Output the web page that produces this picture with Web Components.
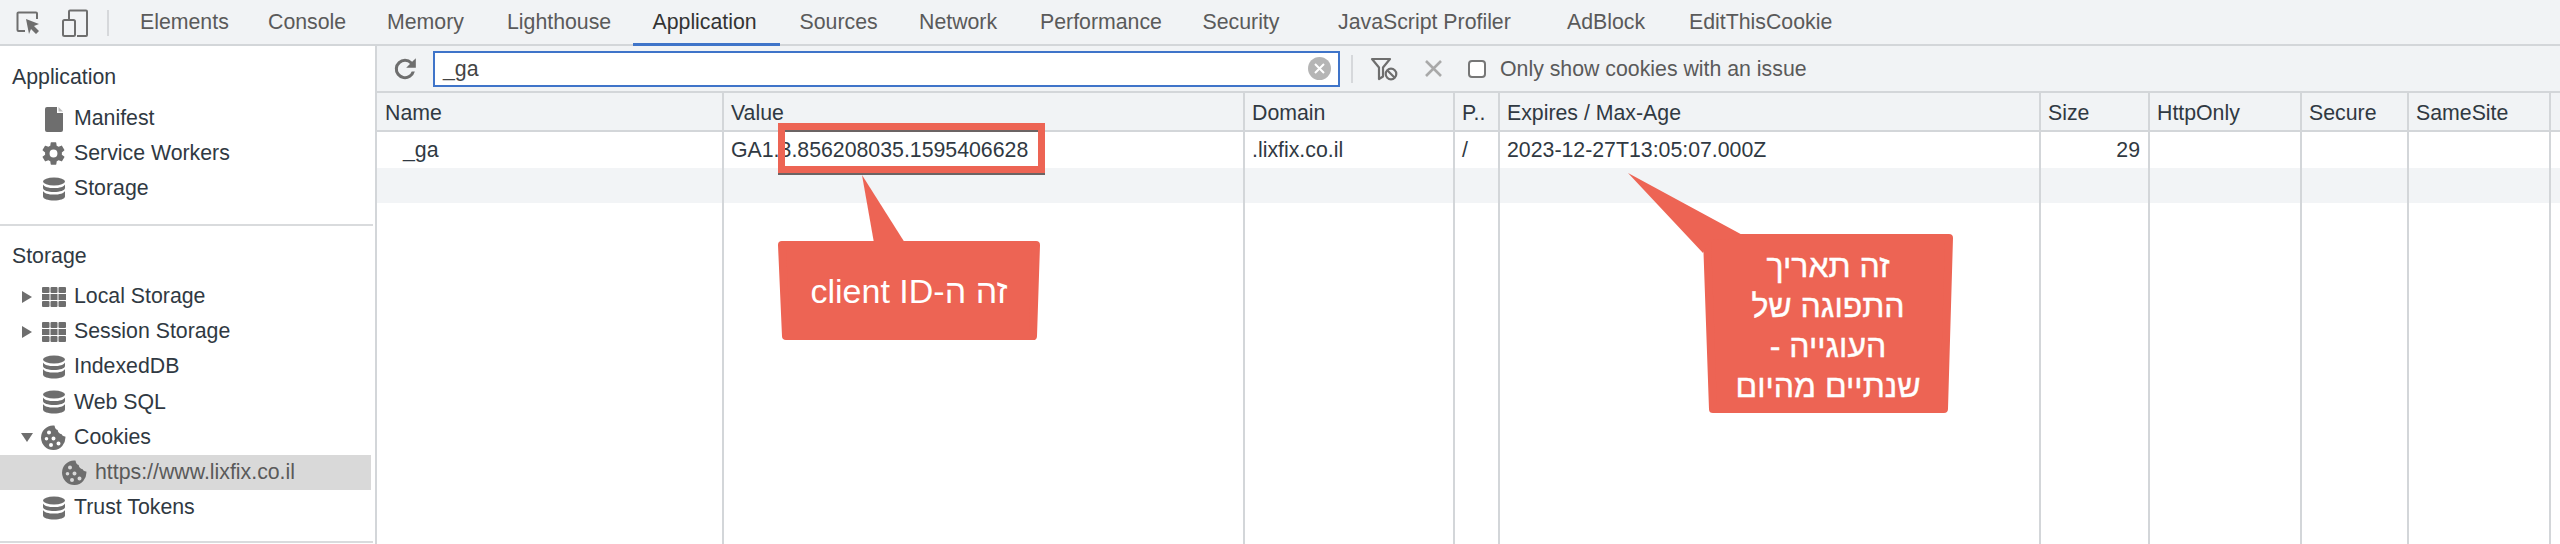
<!DOCTYPE html>
<html lang="en">
<head>
<meta charset="utf-8">
<title>Application - Cookies</title>
<style>
  html, body { margin: 0; height: 100%; overflow: hidden; background: #fff; }
  body { font: 21.3px "Liberation Sans", Arial, sans-serif; color: #303942; }
  .he { font-size: 32px; -webkit-text-stroke: 0.4px #fff; }
</style>
</head>
<body>
<dt-app>
  <dt-tabbar></dt-tabbar>
  <dt-sidebar></dt-sidebar>
  <dt-cookies></dt-cookies>
</dt-app>
<dt-frame></dt-frame>
<dt-callout box="778 175 262 165" body="782,245 1036,245 1033,336 786,336" tip="862,175 874,243 905,243" inset="66 0 0 0">
  <span dir="rtl">זה ה-client ID</span>
</dt-callout>
<dt-callout box="1628 173 325 240" body="1707,238 1949,238 1944,409 1713,409" tip="1628,173 1748,238 1710,240 1703,253" inset="65 0 0 75">
  <span dir="rtl" class="he">זה תאריך<br>התפוגה של<br>העוגייה -<br>שנתיים מהיום</span>
</dt-callout>

<script>
const GREY = "#6e6e6e";

const ICONS = {
  inspect: `<svg width="24" height="24" viewBox="0 0 24 24"><path d="M9 20H2.500a1 1 0 0 1-1-1V2.500a1 1 0 0 1 1-1H20a1 1 0 0 1 1 1V8" fill="none" stroke="${GREY}" stroke-width="2"/><path d="M10 8l13 5-5 2 5 5-3 3-5-5-2 5z" fill="${GREY}"/></svg>`,
  device: `<svg width="28" height="28" viewBox="0 0 28 28" fill="none" stroke="${GREY}" stroke-width="2"><path d="M8 11V2.500a1 1 0 0 1 1-1h16a1 1 0 0 1 1 1V26a1 1 0 0 1-1 1H16"/><rect x="2" y="11" width="12" height="16" rx="1.500"/></svg>`,
  file: `<svg width="20" height="26" viewBox="0 0 20 26"><path d="M3 1h9l1 0v6h6v17a2 2 0 0 1-2 2H3a2 2 0 0 1-2-2V3a2 2 0 0 1 2-2z" fill="${GREY}"/><path d="M14.500 1l4.500 4.500h-4.500z" fill="#bdbdbd"/></svg>`,
  gear: `<svg width="27" height="27" viewBox="0 0 24 24"><path fill="${GREY}" d="M19.400 13c.04-.33.06-.66.06-1s-.02-.67-.06-1l2.100-1.650c.2-.15.240-.42.120-.64l-2-3.460c-.12-.22-.39-.3-.61-.22l-2.500 1c-.52-.4-1.080-.73-1.690-.98l-.38-2.650A.49.49 0 0 0 14 2h-4c-.25 0-.46.18-.49.420l-.38 2.650c-.61.250-1.170.59-1.690.98l-2.500-1c-.23-.09-.49 0-.61.220l-2 3.460c-.13.220-.07.490.12.640L4.570 11c-.04.330-.07.670-.07 1s.03.670.07 1l-2.110 1.650c-.19.150-.25.420-.12.640l2 3.460c.12.220.39.300.61.220l2.500-1c.52.400 1.080.730 1.690.980l.38 2.650c.03.240.24.420.49.420h4c.25 0 .46-.18.49-.42l.38-2.650c.61-.25 1.170-.59 1.690-.98l2.500 1c.23.090.49 0 .61-.22l2-3.460c.12-.22.07-.49-.12-.64L19.400 13zM12 15.500a3.500 3.500 0 1 1 0-7 3.500 3.500 0 0 1 0 7z"/></svg>`,
  db: `<svg width="24" height="24" viewBox="0 0 24 24" fill="${GREY}"><ellipse cx="12" cy="4.500" rx="11" ry="4"/><path d="M1 7.500c1 2.500 5.500 3.600 11 3.600s10-1.100 11-3.600v3.500c0 2.400-5 4-11 4S1 13.400 1 11z"/><path d="M1 14c1 2.500 5.500 3.600 11 3.600S22 16.500 23 14v5.500c0 2.400-5 4-11 4s-11-1.600-11-4z"/></svg>`,
  grid: `<svg width="24" height="20" viewBox="0 0 24 20" fill="${GREY}"><rect x="0" y="0" width="7.500" height="6" rx="1"/><rect x="8.500" y="0" width="7" height="6" rx="1"/><rect x="16.500" y="0" width="7.500" height="6" rx="1"/><rect x="0" y="7" width="7.500" height="6"/><rect x="8.500" y="7" width="7" height="6"/><rect x="16.500" y="7" width="7.500" height="6"/><rect x="0" y="14" width="7.500" height="6" rx="1"/><rect x="8.500" y="14" width="7" height="6" rx="1"/><rect x="16.500" y="14" width="7.500" height="6" rx="1"/></svg>`,
  cookie: `<svg width="25" height="25" viewBox="0 0 25 25"><path fill="${GREY}" fill-rule="evenodd" d="M12 .500c.6 0 1.200.05 1.700.13-.2 2 1 3.900 3 4.400.1 2.200 1.700 4 4 4.200.5 1.400 1.900 2.300 3.600 2.200.1.200.1.400.1.600A12.200 12.200 0 1 1 12 .500zM8 5.500a2 2 0 1 0 0 4 2 2 0 0 0 0-4zM5.500 12a1.800 1.800 0 1 0 0 3.600 1.800 1.800 0 0 0 0-3.600zm7-.5a2 2 0 1 0 0 4 2 2 0 0 0 0-4zM10 18a2 2 0 1 0 0 4 2 2 0 0 0 0-4zm7.500-1.500a2 2 0 1 0 0 4 2 2 0 0 0 0-4z"/></svg>`,
  reload: `<svg width="26" height="26" viewBox="0 0 24 24"><path fill="${GREY}" d="M18.600 5.400A9.300 9.300 0 0 0 12 2.600a9.400 9.400 0 1 0 9.100 11.700h-2.900A6.600 6.600 0 1 1 12 5.400c1.800 0 3.400.8 4.600 1.900l-3.500 3.500H22V2z"/></svg>`,
  filterClear: `<svg width="28" height="24" viewBox="0 0 28 24"><path d="M2 2h18l-7 8.500v9l-4 2.500V10.500z" fill="none" stroke="${GREY}" stroke-width="2.200" stroke-linejoin="round"/><circle cx="21" cy="17" r="5.300" fill="#f1f3f5" stroke="${GREY}" stroke-width="2.200"/><path d="M17.500 13.500l7 7" stroke="${GREY}" stroke-width="2.200"/></svg>`,
};

// Small helper so each class only has to state its css and markup
function shadow(host, css, html) {
  host.attachShadow({ mode: "open" }).innerHTML = `<style>${css}</style>${html}`;
}

class DtApp extends HTMLElement {
  connectedCallback() {
    shadow(this, `
      :host { display: grid; grid-template-columns: 377px 1fr; grid-template-rows: 46px 1fr; height: 544px; }
      ::slotted(dt-tabbar) { grid-column: 1 / -1; }
    `, `<slot></slot>`);
  }
}

class DtTabbar extends HTMLElement {
  connectedCallback() {
    const tabs = [
      ["Elements", 128], ["Console", 119], ["Memory", 120], ["Lighthouse", 145.5],
      ["Application", 147], ["Sources", 119.5], ["Network", 121], ["Performance", 162.5],
      ["Security", 135.5], ["JavaScript Profiler", 229], ["AdBlock", 122], ["EditThisCookie", 200],
    ];
    shadow(this, `
      :host { display: flex; align-items: stretch; background: #f1f3f5; box-shadow: inset 0 -2px 0 #d3d6d9; padding-left: 16px; box-sizing: border-box; height: 46px; }
      .tools { display: flex; align-items: center; width: 104px; }
      .tools svg { display: block; }
      .device { margin-left: 21px; }
      .sep { width: 2px; height: 26px; background: #d6d8db; margin-left: 18px; }
      .tab { box-sizing: border-box; padding: 0 0 2px 20px; display: flex; align-items: center; color: #5a5a5a; white-space: nowrap; flex: none; }
      .tab.on { color: #333; box-shadow: inset 0 -3px 0 #3f74c9; }
    `, `
      <div class="tools">${ICONS.inspect}<span class="device">${ICONS.device}</span><span class="sep"></span></div>
      ${tabs.map(([t, w]) => `<div class="tab ${t === "Application" ? "on" : ""}" style="width:${w}px">${t}</div>`).join("")}
    `);
  }
}

class DtTreeItem extends HTMLElement {
  connectedCallback() {
    const arrow = this.getAttribute("arrow");
    const tri = arrow === "right" ? `<path d="M1 0l10 6-10 6z"/>` : arrow === "down" ? `<path d="M0 2h12l-6 9z"/>` : "";
    shadow(this, `
      :host { display: flex; align-items: center; height: 35.2px; white-space: nowrap; color: #303942; padding-left: 21px; }
      :host([nested]) { padding-left: 42px; }
      :host([selected]) { background: #d9d9d9; color: #5a5a5a; margin-right: 2px; }
      .tri { width: 16px; flex: none; display: flex; }
      .icon { width: 33px; flex: none; display: flex; justify-content: center; margin-right: 4px; }
      .icon svg { display: block; }
    `, `
      <span class="tri"><svg width="12" height="12" viewBox="0 0 12 12" fill="${GREY}">${tri}</svg></span>
      <span class="icon">${ICONS[this.getAttribute("icon")]}</span>
      <slot></slot>
    `);
  }
}

class DtSidebar extends HTMLElement {
  connectedCallback() {
    shadow(this, `
      :host { display: block; box-sizing: border-box; border-right: 2px solid #d3d6d9; overflow: hidden; background: #fff; }
      h2 { font: inherit; margin: 0; padding: 0 0 0 12px; height: 55px; line-height: 62px; color: #303942; }
      .sec { border-bottom: 2px solid #d9dbdd; margin-right: 2px; }
      .a { height: 178px; }
      .b { height: 315px; }
      .b h2 { height: 53px; line-height: 60px; }
    `, `
      <section class="sec a">
        <h2>Application</h2>
        <dt-tree-item icon="file">Manifest</dt-tree-item>
        <dt-tree-item icon="gear">Service Workers</dt-tree-item>
        <dt-tree-item icon="db">Storage</dt-tree-item>
      </section>
      <section class="sec b">
        <h2>Storage</h2>
        <dt-tree-item icon="grid" arrow="right">Local Storage</dt-tree-item>
        <dt-tree-item icon="grid" arrow="right">Session Storage</dt-tree-item>
        <dt-tree-item icon="db">IndexedDB</dt-tree-item>
        <dt-tree-item icon="db">Web SQL</dt-tree-item>
        <dt-tree-item icon="cookie" arrow="down">Cookies</dt-tree-item>
        <dt-tree-item icon="cookie" nested selected>https://www.lixfix.co.il</dt-tree-item>
        <dt-tree-item icon="db">Trust Tokens</dt-tree-item>
      </section>
    `);
  }
}

class DtCookies extends HTMLElement {
  connectedCallback() {
    // column widths read off the divider positions
    const cols = "347px 521px 210px 45px 541px 109px 152px 107px 142px 1fr";
    const head = ["Name", "Value", "Domain", "P..", "Expires / Max-Age", "Size", "HttpOnly", "Secure", "SameSite", ""];
    const row = ["_ga", "GA1.3.856208035.1595406628", ".lixfix.co.il", "/", "2023-12-27T13:05:07.000Z", "29", "", "", "", ""];
    const cells = (list, cls) => list.map((t, i) =>
      `<div class="${cls} c${i}">${t}</div>`).join("");
    shadow(this, `
      :host { display: flex; flex-direction: column; min-width: 0; overflow: hidden; }
      .toolbar { height: 47px; flex: none; box-sizing: border-box; background: #f1f3f5; border-bottom: 2px solid #d3d6d9; display: flex; align-items: center; padding: 0 0 0 15px; color: #5a5a5a; }
      .toolbar svg { display: block; }
      .lift { padding-top: 1px; }
      .filter { box-sizing: border-box; width: 907px; height: 36px; margin-left: 15px; border: 2px solid #3f74c9; background: #fff; display: flex; align-items: center; justify-content: space-between; padding: 0 7px 0 8px; color: #444; }
      .clear { width: 23px; height: 23px; border-radius: 50%; background: #b5b5b5; position: relative; flex: none; }
      .clear svg { position: absolute; left: 5px; top: 5px; }
      .sep { width: 2px; height: 28px; background: #d6d8db; margin-left: 11px; }
      .fc { margin-left: 17px; }
      .x { margin-left: 26px; }
      .check { width: 18px; height: 18px; box-sizing: border-box; border: 2px solid #767676; border-radius: 4px; background: #fff; margin-left: 25px; flex: none; }
      .lbl { margin-left: 14px; white-space: nowrap; padding-top: 1px; }
      .grid { flex: 1; display: grid; grid-template-columns: ${cols}; grid-template-rows: 39px 36px 35px 1fr; }
      .h, .r, .a, .e { box-sizing: border-box; border-right: 2px solid #d3d6d9; padding-left: 7px; white-space: nowrap; overflow: hidden; display: flex; align-items: center; }
      .h { background: #f1f3f5; border-bottom: 2px solid #d3d6d9; color: #303942; padding-top: 3px; }
      .r { background: #fff; color: #303942; }
      .a { background: #f2f4f6; }
      .e { background: #fff; }
      .c9 { border-right: 0; }
      .h.c0 { padding-left: 8px; }
      .r.c0 { padding-left: 26px; }
      .r.c5 { justify-content: flex-end; padding: 0 8px 0 0; }
    `, `
      <div class="toolbar">
        ${ICONS.reload}
        <div class="filter"><span class="lift">_ga</span><span class="clear"><svg width="13" height="13" viewBox="0 0 13 13"><path d="M2 2l9 9M11 2l-9 9" stroke="#fff" stroke-width="2"/></svg></span></div>
        <span class="sep"></span>
        <span class="fc">${ICONS.filterClear}</span>
        <span class="x"><svg width="19" height="19" viewBox="0 0 19 19"><path d="M2 2l15 15M17 2L2 17" stroke="#a9a9a9" stroke-width="2.600"/></svg></span>
        <span class="check"></span>
        <span class="lbl">Only show cookies with an issue</span>
      </div>
      <div class="grid">
        ${cells(head, "h")}
        ${cells(row, "r")}
        ${cells(head.map(() => ""), "a")}
        ${cells(head.map(() => ""), "e")}
      </div>
    `);
  }
}

// Red rectangle drawn over the value cell
class DtFrame extends HTMLElement {
  connectedCallback() {
    shadow(this, `
      :host { position: absolute; left: 778px; top: 123px; width: 267px; height: 50px; box-sizing: border-box; border: 7px solid #ed6454; box-shadow: 0 2px 0 #6b6464, inset 0 2px 0 #6b6464; }
    `, ``);
  }
}

class DtCallout extends HTMLElement {
  connectedCallback() {
    const [x, y, w, h] = this.getAttribute("box").split(" ").map(Number);
    const [t, r, b, l] = this.getAttribute("inset").split(" ").map(Number);
    shadow(this, `
      :host { position: absolute; left: ${x}px; top: ${y}px; width: ${w}px; height: ${h}px; color: #fff; font: 34px/40px "Liberation Sans", Arial, sans-serif; text-align: center; }
      svg { position: absolute; inset: 0; display: block; }
      .label { position: absolute; top: ${t}px; right: ${r}px; bottom: ${b}px; left: ${l}px; display: flex; align-items: center; justify-content: center; }
    `, `
      <svg width="${w}" height="${h}" viewBox="${x} ${y} ${w} ${h}" fill="#ed6454">
        <polygon points="${this.getAttribute("body")}" stroke="#ed6454" stroke-width="8" stroke-linejoin="round"/>
        <polygon points="${this.getAttribute("tip")}"/>
      </svg>
      <div class="label"><slot></slot></div>
    `);
  }
}

customElements.define("dt-app", DtApp);
customElements.define("dt-tabbar", DtTabbar);
customElements.define("dt-tree-item", DtTreeItem);
customElements.define("dt-sidebar", DtSidebar);
customElements.define("dt-cookies", DtCookies);
customElements.define("dt-frame", DtFrame);
customElements.define("dt-callout", DtCallout);
</script>
</body>
</html>
